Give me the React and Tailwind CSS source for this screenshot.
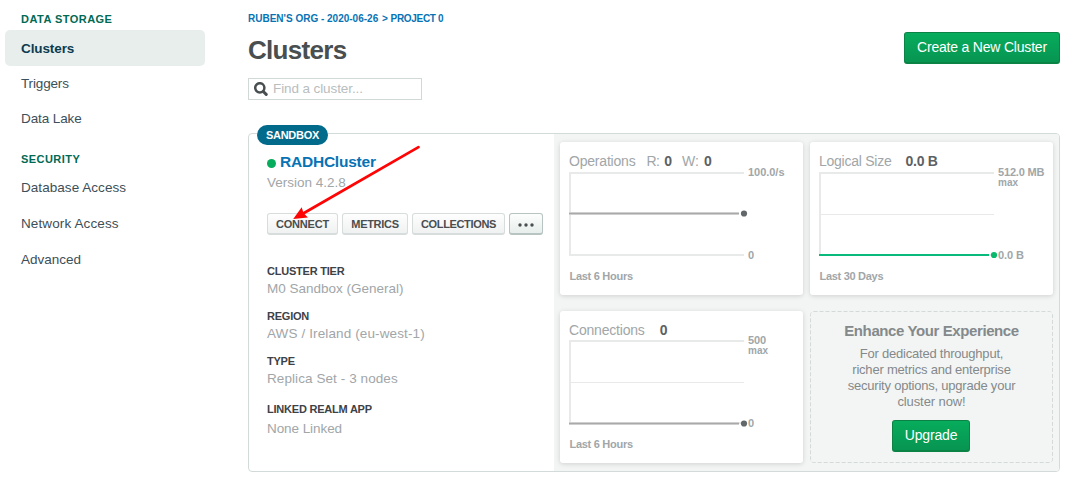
const navLink = 'flex items-center pl-4 text-[13.5px] text-[#3d4f58]';

function Sidebar() {
  return (
    <nav className="flex w-[248px] shrink-0 flex-col pl-[5px] pt-3">
      <h2 className="flex h-[14px] items-center pl-4 text-[11px] font-bold tracking-[0.47px] text-[#006a55]">DATA STORAGE</h2>
      <div className="mt-1 flex h-9 w-[200px] items-center rounded-[5px] bg-[#e7eeec] pl-4 pt-0.5 text-[13.5px] font-bold tracking-[-0.1px] text-[#0b3b4f]"><a>Clusters</a></div>
      <a className={navLink + ' h-[35px] pt-0.5'}><span className="tracking-[-0.15px]">Triggers</span></a>
      <a className={navLink + ' h-[35px] pt-0.5'}><span className="tracking-[-0.1px]">Data Lake</span></a>
      <h2 className="mt-4 flex h-[14px] items-center pl-4 text-[11px] font-bold tracking-[0.45px] text-[#006a55]">SECURITY</h2>
      <a className={navLink + ' mt-1 h-9'}><span className="tracking-[0.05px]">Database Access</span></a>
      <a className={navLink + ' h-9'}><span className="tracking-[0.12px]">Network Access</span></a>
      <a className={navLink + ' h-9'}><span>Advanced</span></a>
    </nav>
  );
}

const greenButton =
  'flex h-8 items-center justify-center rounded-[3px] border border-b-2 border-[#0a8345] bg-gradient-to-b from-[#07ac5c] to-[#079552] text-[14px] text-white';

const smallButton =
  'flex h-[22px] items-center justify-center rounded-[3px] border border-b-2 border-[#d6dddc] bg-gradient-to-b from-[#fefefe] to-[#f0f1f1] pt-px text-[11px] font-bold text-[#494e50]';

function Detail({ label, children }) {
  return (
    <div>
      <div className="h-[13px] text-[11px] font-bold leading-[13px] tracking-[-0.22px] text-[#3d4247]">{label}</div>
      {children}
    </div>
  );
}

function ClusterInfo() {
  return (
    <section className="relative w-[305px] shrink-0 pl-[18px] pt-[19px]">
      <div className="absolute left-2 top-[-9px] flex h-5 w-[71px] items-center justify-center rounded-full bg-[#026a8b] pt-px text-[11px] font-bold tracking-[-0.3px] text-white">SANDBOX</div>
      <div className="flex h-[18px] items-center">
        <span className="mt-[3px] h-[9px] w-[9px] rounded-full bg-[#07ac5c]" />
        <a className="ml-1 text-[15.5px] font-bold tracking-[-0.22px] text-[#0773b5]">RADHCluster</a>
      </div>
      <div className="mt-[3px] h-4 text-[13.5px] leading-[17px] text-[#a1a6a8]">Version 4.2.8</div>
      <div className="mt-[23px] flex">
        <button className={smallButton + ' w-[71px] tracking-[-0.2px]'}>CONNECT</button>
        <button className={smallButton + ' ml-1 w-[66px] tracking-[-0.3px]'}>METRICS</button>
        <button className={smallButton + ' ml-1 w-[93px] tracking-[-0.35px]'}>COLLECTIONS</button>
        <button className="ml-1 flex h-[22px] w-[34px] items-center justify-center rounded-[3px] border border-b-2 border-[#b8c4c2] bg-gradient-to-b from-[#fcfefd] to-[#e7eeec] pt-0.5">
          <svg width="16" height="4"><g fill="#494e50"><circle cx="2" cy="2" r="1.700" /><circle cx="8" cy="2" r="1.700" /><circle cx="14" cy="2" r="1.700" /></g></svg>
        </button>
      </div>
      <div className="mt-[30px] flex flex-col">
        <Detail label="CLUSTER TIER"><p className="mt-0.5 h-[30px] text-[13.5px] leading-[18px] text-[#a1a6a8]">M0 Sandbox (General)</p></Detail>
        <Detail label="REGION"><p className="mt-0.5 h-[30px] text-[13.5px] leading-[18px] tracking-[0.12px] text-[#a1a6a8]">AWS / Ireland (eu-west-1)</p></Detail>
        <Detail label="TYPE"><p className="mt-0.5 h-[33px] text-[13.5px] leading-[18px] tracking-[0.08px] text-[#a1a6a8]">Replica Set - 3 nodes</p></Detail>
        <Detail label="LINKED REALM APP"><p className="mt-1 text-[13.5px] leading-[18px] tracking-[-0.07px] text-[#a1a6a8]">None Linked</p></Detail>
      </div>
      <svg className="pointer-events-none absolute left-[41px] top-[8px]" width="134" height="82">
        <path d="M128.500 5.200 L14 71" stroke="#fe0404" strokeWidth="2.7" strokeLinecap="round" />
        <path d="M3.200 77 L11.700 65.300 L13.500 71 L17.900 75.500 Z" fill="#fe0404" />
      </svg>
    </section>
  );
}

function Chart({ max, maxNote, maxWidth, min, minWidth, period, periodWidth, line, level, mid, dot, top = 31, footer = 138 }) {
  return (
    <svg className="-mt-[5px] block" width="234" height="128" viewBox="9 24 234 128" fontFamily="Liberation Sans, sans-serif" fontSize="11" fontWeight="700" fill="#a1a6a8">
      <path d={`M184 ${top} H10 V${top + 82} H184`} fill="none" stroke="#e8e9e9" strokeWidth="2" />
      {mid && <path d={`M11 ${mid} H184`} stroke="#e8e9e9" />}
      {line === '#a9a9a9' && <path d={`M9 ${level} H179`} stroke="#cfcfcf" strokeWidth="3" />}
      <path d={`M9 ${level} H179`} stroke={line} strokeWidth={line === '#a9a9a9' ? 1.2 : 2} />
      <circle cx="184" cy={level} r="3.1" fill={dot} />
      <text x="188" y={top + 3} textLength={maxWidth}>{max}</text>
      {maxNote && <text x="188" y={top + 12.5} fontSize="10" textLength="20">{maxNote}</text>}
      <text x="188" y={top + 86} textLength={minWidth}>{min}</text>
      <text x="9.500" y={footer} textLength={periodWidth}>{period}</text>
    </svg>
  );
}

const metricCard = 'h-[153px] w-[243px] overflow-hidden rounded-[3px] bg-white pl-[9px] shadow-[0_1px_5px_rgba(0,0,0,0.15)]';
const metricTitle = 'flex h-[29px] items-end pb-px text-[14px] leading-[18px] text-[#a1a6a8]';

function Metrics() {
  return (
    <section className="grid grow grid-cols-[243px_243px] grid-rows-[153px_152px] content-start gap-x-[7px] gap-y-4 rounded-r-[3px] bg-[#f3f5f4] pl-[6px] pt-2">
      <div className={metricCard}>
        <div className={metricTitle}><span className="tracking-[-0.2px]">Operations</span><span className="ml-[11px] tracking-[-0.6px]">R:</span><b className="ml-[5px] text-[#5d6163]">0</b><span className="ml-[10px]">W:</span><b className="ml-[5px] text-[#5d6163]">0</b></div>
        <Chart max="100.0/s" maxWidth="36.500" min="0" minWidth="6" period="Last 6 Hours" periodWidth="63.500" line="#a9a9a9" level={71.5} dot="#626769" />
      </div>
      <div className={metricCard}>
        <div className={metricTitle}><span className="tracking-[-0.25px]">Logical Size</span><b className="ml-[14px] tracking-[-0.25px] text-[#5d6163]">0.0 B</b></div>
        <Chart max="512.0 MB" maxNote="max" maxWidth="46.500" min="0.0 B" minWidth="26" period="Last 30 Days" periodWidth="64" line="#09ba7d" level={113} mid={72.5} dot="#09ba6c" />
      </div>
      <div className={metricCard + ' max-h-[152px]'}>
        <div className={metricTitle}><span className="tracking-[-0.2px]">Connections</span><b className="ml-[15px] text-[#5d6163]">0</b></div>
        <Chart top={30} footer={137} max="500" maxNote="max" maxWidth="18" min="0" minWidth="6" period="Last 6 Hours" periodWidth="63.500" line="#a9a9a9" level={112.5} mid={71.5} dot="#626769" />
      </div>
      <div className="relative flex flex-col items-center pt-[11px] text-[#84898b]">
        <svg className="absolute inset-0" width="243" height="152"><rect x=".5" y=".5" width="242" height="151" rx="3" fill="none" stroke="#d4dad8" strokeDasharray="4 2" /></svg>
        <h3 className="h-[18px] whitespace-nowrap text-[15px] font-bold leading-[18px] tracking-[-0.4px]">Enhance Your Experience</h3>
        <p className="mt-[6px] whitespace-nowrap text-center text-[13px] leading-4 tracking-[-0.22px]">For dedicated throughput,<br />richer metrics and enterprise<br />security options, upgrade your<br /><span className="tracking-[-0.1px]">cluster now!</span></p>
        <button className={greenButton + ' mr-px mt-[10px] w-[78px] shrink-0 tracking-[-0.15px]'}>Upgrade</button>
      </div>
    </section>
  );
}

export default function App() {
  return (
    <div className="flex h-[488px] w-[1071px] overflow-hidden bg-white font-['Liberation_Sans',sans-serif]">
      <Sidebar />
      <main className="flex w-[812px] flex-col">
        <header className="flex h-[133px] justify-between">
          <div className="pt-3">
            <div className="h-[14px] text-[10px] font-bold leading-[14px] text-[#0773b5]">RUBEN'S ORG - 2020-06-26 <span className="ml-px">&gt;</span> <span className="tracking-[-0.32px]">PROJECT 0</span></div>
            <h1 className="mt-2 h-8 text-[26px] font-bold leading-8 tracking-[-0.7px] text-[#494e50]">Clusters</h1>
            <div className="mt-3 flex h-[22px] w-[174px] items-center border border-[#d1d8d8] pl-[5px]">
              <svg width="14" height="14" viewBox="0 0 14 14" fill="none" stroke="#494e50"><circle cx="5.800" cy="5.800" r="4.600" strokeWidth="2.500" /><path d="M9.300 9.500 L12.200 12.400" strokeWidth="3" strokeLinecap="round" /></svg>
              <span className="ml-[5px] text-[13.5px] tracking-[-0.1px] text-[#b8bdbe]">Find a cluster...</span>
            </div>
          </div>
          <button className={greenButton + ' mt-8 w-[156px] tracking-[-0.2px]'}>Create a New Cluster</button>
        </header>
        <article className="flex h-[339px] rounded-[4px] border border-[#d3dada]">
          <ClusterInfo />
          <Metrics />
        </article>
      </main>
    </div>
  );
}
